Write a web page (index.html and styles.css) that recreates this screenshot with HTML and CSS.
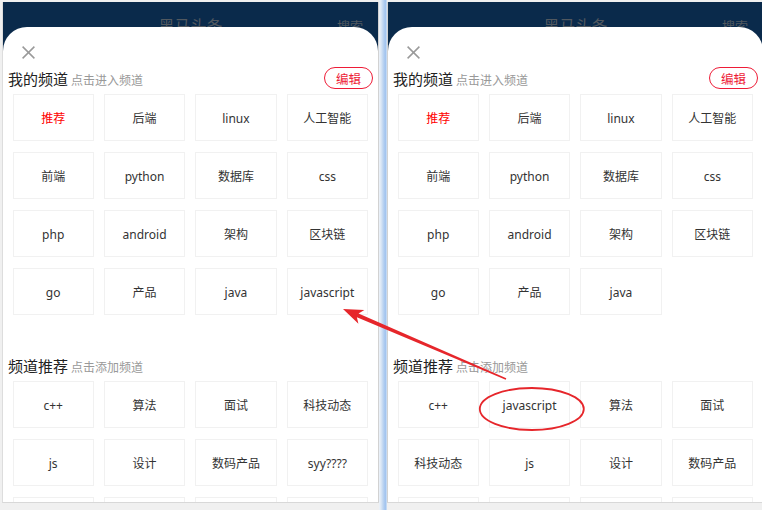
FILE: index.html
```html
<!DOCTYPE html>
<html lang="zh-CN">
<head>
<meta charset="utf-8">
<title>频道编辑</title>
<link rel="stylesheet" href="styles.css">
</head>
<body>
<div class="stage">
  <section class="phone phone-left">
    <header class="nav"><span></span><span class="nav-title">黑马头条</span><span class="nav-search">搜索</span></header>
    <div class="popup">
      <div class="close"><svg viewBox="0 0 13 13" width="13" height="13"><path d="M0.6 0.6 L12.4 12.4 M12.4 0.6 L0.6 12.4" stroke="#9a9a9a" stroke-width="1.5" fill="none"/></svg></div>
      <div class="sec-title"><span class="t-main">我的频道</span><span class="t-sub">点击进入频道</span><span class="edit">编辑</span></div>
      <div class="grid">
        <div class="cell active">推荐</div><div class="cell">后端</div><div class="cell">linux</div><div class="cell">人工智能</div>
        <div class="cell">前端</div><div class="cell">python</div><div class="cell">数据库</div><div class="cell">css</div>
        <div class="cell">php</div><div class="cell">android</div><div class="cell">架构</div><div class="cell">区块链</div>
        <div class="cell">go</div><div class="cell">产品</div><div class="cell">java</div><div class="cell">javascript</div>
      </div>
      <div class="sec-title sec-two"><span class="t-main">频道推荐</span><span class="t-sub">点击添加频道</span></div>
      <div class="grid">
        <div class="cell">c++</div><div class="cell">算法</div><div class="cell">面试</div><div class="cell">科技动态</div>
        <div class="cell">js</div><div class="cell">设计</div><div class="cell">数码产品</div><div class="cell">syy????</div>
        <div class="cell"></div><div class="cell"></div><div class="cell"></div><div class="cell"></div>
      </div>
    </div>
  </section>
  <div class="divider"></div>
  <section class="phone phone-right">
    <header class="nav"><span></span><span class="nav-title">黑马头条</span><span class="nav-search">搜索</span></header>
    <div class="popup">
      <div class="close"><svg viewBox="0 0 13 13" width="13" height="13"><path d="M0.6 0.6 L12.4 12.4 M12.4 0.6 L0.6 12.4" stroke="#9a9a9a" stroke-width="1.5" fill="none"/></svg></div>
      <div class="sec-title"><span class="t-main">我的频道</span><span class="t-sub">点击进入频道</span><span class="edit">编辑</span></div>
      <div class="grid">
        <div class="cell active">推荐</div><div class="cell">后端</div><div class="cell">linux</div><div class="cell">人工智能</div>
        <div class="cell">前端</div><div class="cell">python</div><div class="cell">数据库</div><div class="cell">css</div>
        <div class="cell">php</div><div class="cell">android</div><div class="cell">架构</div><div class="cell">区块链</div>
        <div class="cell">go</div><div class="cell">产品</div><div class="cell">java</div>
      </div>
      <div class="sec-title sec-two"><span class="t-main">频道推荐</span><span class="t-sub">点击添加频道</span></div>
      <div class="grid">
        <div class="cell">c++</div><div class="cell">javascript</div><div class="cell">算法</div><div class="cell">面试</div>
        <div class="cell">科技动态</div><div class="cell">js</div><div class="cell">设计</div><div class="cell">数码产品</div>
        <div class="cell"></div><div class="cell"></div><div class="cell"></div><div class="cell"></div>
      </div>
    </div>
  </section>
  <svg class="annot" viewBox="0 0 762 510" width="762" height="510">
    <g transform="translate(343 309) rotate(23.24)">
      <polygon points="0,0 20,-7.5 16,-2.1 177.4,-0.7 177.4,0.7 16,2.1 20,7.5" fill="#e6262b"/>
    </g>
    <ellipse cx="531.8" cy="409" rx="52" ry="21" fill="none" stroke="#e6262b" stroke-width="1.8"/>
  </svg>
</div>
</body>
</html>
```

FILE: styles.css
```css
html, body {
  margin: 0;
  padding: 0;
}
body {
  width: 762px;
  height: 510px;
  overflow: hidden;
  background: #f0f0f0;
  font-family: "Noto Sans", "Noto Sans CJK SC", sans-serif;
}
.stage {
  position: relative;
  display: flex;
  align-items: flex-start;
  width: 762px;
  height: 510px;
}
.phone {
  flex: none;
  width: 375px;
  height: 500px;
  margin-top: 2px;
  background: #0a2a4b;
  overflow: hidden;
  border-bottom: 1px solid #d8d8d8;
}
.phone-left {
  margin-left: 2px;
  border-left: 1px solid #dddddd;
  border-right: 1px solid #d2d2d2;
}
.phone-right {
  border-left: 1px solid #d2d2d2;
}
.divider {
  flex: none;
  width: 8px;
  height: 510px;
  background: linear-gradient(to right, #eef3f9 0%, #dbe7f5 25%, #bed5f1 50%, #a0c3ef 80%, #d3e3f6 100%);
}
.nav {
  height: 25px;
  display: grid;
  grid-template-columns: 1fr auto 1fr;
  line-height: 48px;
  color: #51585f;
}
.nav-title {
  font-size: 16px;
}
.nav-search {
  justify-self: end;
  padding-right: 15px;
  font-size: 13px;
}
.popup {
  position: relative;
  z-index: 1;
  height: 475px;
  background: #ffffff;
  border-radius: 24px 24px 0 0;
  padding-top: 19px;
  box-sizing: border-box;
}
.close {
  width: 13px;
  height: 13px;
  margin-left: 18.5px;
}
.close svg {
  display: block;
}
.sec-title {
  display: flex;
  align-items: center;
  height: 22px;
  margin-top: 8px;
  margin-bottom: 5px;
  padding: 0 5px;
}
.sec-two {
  margin-top: 39px;
}
.t-main {
  font-size: 15px;
  color: #222222;
  padding-top: 1px;
}
.t-sub {
  font-size: 12px;
  color: #999999;
  margin-left: 3px;
  padding-top: 3px;
}
.edit {
  margin-left: auto;
  box-sizing: border-box;
  width: 49px;
  height: 22px;
  border: 1px solid #ee1c37;
  border-radius: 11px;
  color: #ee1c37;
  font-size: 12.5px;
  display: flex;
  align-items: center;
  justify-content: center;
}
.grid {
  display: grid;
  grid-template-columns: repeat(4, 1fr);
  column-gap: 10px;
  row-gap: 11px;
  padding: 0 10px 0 9.5px;
}
.cell {
  box-sizing: border-box;
  height: 47px;
  border: 1px solid #f1f1f1;
  display: flex;
  align-items: center;
  justify-content: center;
  font-size: 12px;
  color: #333333;
  white-space: nowrap;
  padding-top: 1px;
}
.cell.active {
  color: #ff0000;
}
.annot {
  position: absolute;
  left: 0;
  top: 0;
  pointer-events: none;
  z-index: 10;
}
```
